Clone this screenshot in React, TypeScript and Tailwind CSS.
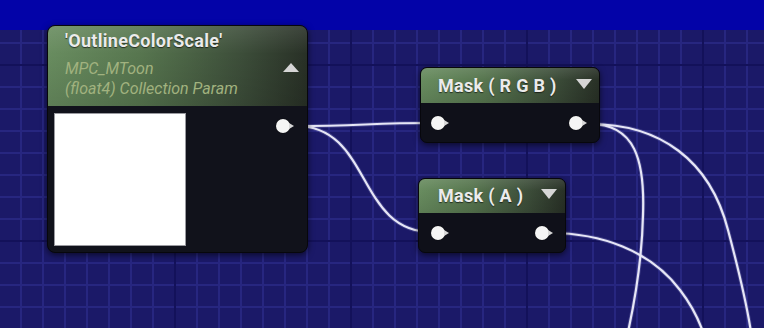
import React from "react";

const W = 764;
const H = 328;

function Grid() {
  const vx: number[] = [];
  for (let x = -1; x <= W; x += 22) vx.push(x);
  const hy: number[] = [];
  for (let y = 21; y <= H; y += 22) hy.push(y);
  const minor = "#272680";
  const major = "#13115a";
  return (
    <svg width={W} height={298} viewBox={`0 30 ${W} 298`} className="block">
      <rect x="0" y="30" width={W} height={298} fill="#1b1968" />
      {vx.filter((x) => (x - 175) % 176 !== 0).map((x) => (
        <line key={"v" + x} x1={x} y1={30} x2={x} y2={H} stroke={minor} strokeWidth={2} />
      ))}
      {hy.filter((y) => (y - 65) % 176 !== 0).map((y) => (
        <line key={"h" + y} x1={0} y1={y} x2={W} y2={y} stroke={minor} strokeWidth={2} />
      ))}
      {vx.filter((x) => (x - 175) % 176 === 0).map((x) => (
        <line key={"V" + x} x1={x} y1={30} x2={x} y2={H} stroke={major} strokeWidth={2} />
      ))}
      {hy.filter((y) => (y - 65) % 176 === 0).map((y) => (
        <line key={"H" + y} x1={0} y1={y} x2={W} y2={y} stroke={major} strokeWidth={2} />
      ))}
    </svg>
  );
}

function Wires() {
  const paths = [
    "M 296 126 C 360 126, 370 123, 432 123",
    "M 296 126 C 372 126, 356 232, 432 232",
    "M 590 124 C 635 124, 645 160, 643 215 C 642 260, 635 300, 628 332",
    "M 590 124 C 660 124, 710 160, 728 230 C 740 275, 746 300, 751 332",
    "M 550 233 C 600 233, 650 250, 680 290 C 690 303, 697 315, 703 332",
  ];
  return (
    <svg width={W} height={H} className="absolute left-0 top-0" viewBox={`0 0 ${W} ${H}`}>
      {paths.map((d, i) => (
        <path key={"g" + i} d={d} fill="none" stroke="#8080c0" strokeOpacity={0.35} strokeWidth={4} />
      ))}
      {paths.map((d, i) => (
        <path key={i} d={d} fill="none" stroke="#e6e6f6" strokeWidth={2.2} />
      ))}
    </svg>
  );
}

function Pin() {
  return (
    <div className="flex items-center">
      <div className="w-[14px] h-[14px] rounded-full bg-[#f5f5f5] shadow-[0_0_1px_#000]" />
      <div className="-ml-[1px] w-0 h-0 border-y-[3px] border-y-transparent border-l-[5px] border-l-[#d8d8d8]" />
    </div>
  );
}

const headerBg =
  "bg-[linear-gradient(180deg,rgba(255,255,255,0.10)_0%,rgba(255,255,255,0)_35%,rgba(0,0,0,0.10)_100%),linear-gradient(90deg,#688c5f_0%,#57764f_35%,#3c4d39_75%,#283026_100%)]";

function TriUp() {
  return <div className="w-0 h-0 border-x-[8px] border-x-transparent border-b-[9px] border-b-[#d6d6d6]" />;
}
function TriDown() {
  return <div className="w-0 h-0 border-x-[8px] border-x-transparent border-t-[10px] border-t-[#d6d6d6]" />;
}

const titleCls =
  "text-[18px] leading-[20px] font-bold tracking-[0.3px] text-[#ebebeb] [text-shadow:0_1px_1px_rgba(0,0,0,0.6)] whitespace-nowrap";

export default function App() {
  const font = { fontFamily: "Roboto, 'Noto Sans', sans-serif" };
  return (
    <div className="relative w-[764px] h-[328px] overflow-hidden bg-[#1b1968]" style={font}>
      <div className="h-[30px] bg-[#0303a8]" />
      <Grid />
      <Wires />

      {/* Parameter node */}
      <div className="absolute left-[47px] top-[25px] w-[261px] h-[228px] rounded-[8px] bg-[#11121b] border border-[#07070c] shadow-[0_2px_6px_rgba(0,0,0,0.6)] overflow-hidden flex flex-col">
        <div className={`relative h-[80px] shrink-0 pl-[17px] pt-[5px] ${headerBg}`}>
          <div className={titleCls}>'OutlineColorScale'</div>
          <div className="mt-[8px] text-[16px] leading-[20px] italic text-[#a1b27f]">MPC_MToon</div>
          <div className="text-[16px] leading-[20px] italic text-[#a1b27f]">(float4) Collection Param</div>
          <div className="absolute right-[8px] top-[37px]">
            <TriUp />
          </div>
        </div>
        <div className="flex-1 flex justify-between items-start pl-[6px] pt-[7px] pr-[13px]">
          <div className="w-[132px] h-[133px] bg-white border border-[#9a9aa0]" />
          <div className="mt-[6px]">
            <Pin />
          </div>
        </div>
      </div>

      {/* Mask RGB */}
      <div className="absolute left-[420px] top-[67px] w-[180px] h-[76px] rounded-[7px] bg-[#0f1019] border border-[#07070c] shadow-[0_2px_6px_rgba(0,0,0,0.6)] overflow-hidden flex flex-col">
        <div className={`relative h-[35px] shrink-0 pl-[17px] flex items-center ${headerBg}`}>
          <div className={titleCls}>Mask ( R G B )</div>
          <div className="absolute right-[7px] top-[11px]">
            <TriDown />
          </div>
        </div>
        <div className="flex-1 flex items-center justify-between pl-[10px] pr-[12px]">
          <Pin />
          <Pin />
        </div>
      </div>

      {/* Mask A */}
      <div className="absolute left-[418px] top-[178px] w-[148px] h-[75px] rounded-[7px] bg-[#0f1019] border border-[#07070c] shadow-[0_2px_6px_rgba(0,0,0,0.6)] overflow-hidden flex flex-col">
        <div className={`relative h-[34px] shrink-0 pl-[19px] flex items-center ${headerBg}`}>
          <div className={titleCls}>Mask ( A )</div>
          <div className="absolute right-[8px] top-[10px]">
            <TriDown />
          </div>
        </div>
        <div className="flex-1 flex items-center justify-between pl-[12px] pr-[12px]">
          <Pin />
          <Pin />
        </div>
      </div>
    </div>
  );
}
